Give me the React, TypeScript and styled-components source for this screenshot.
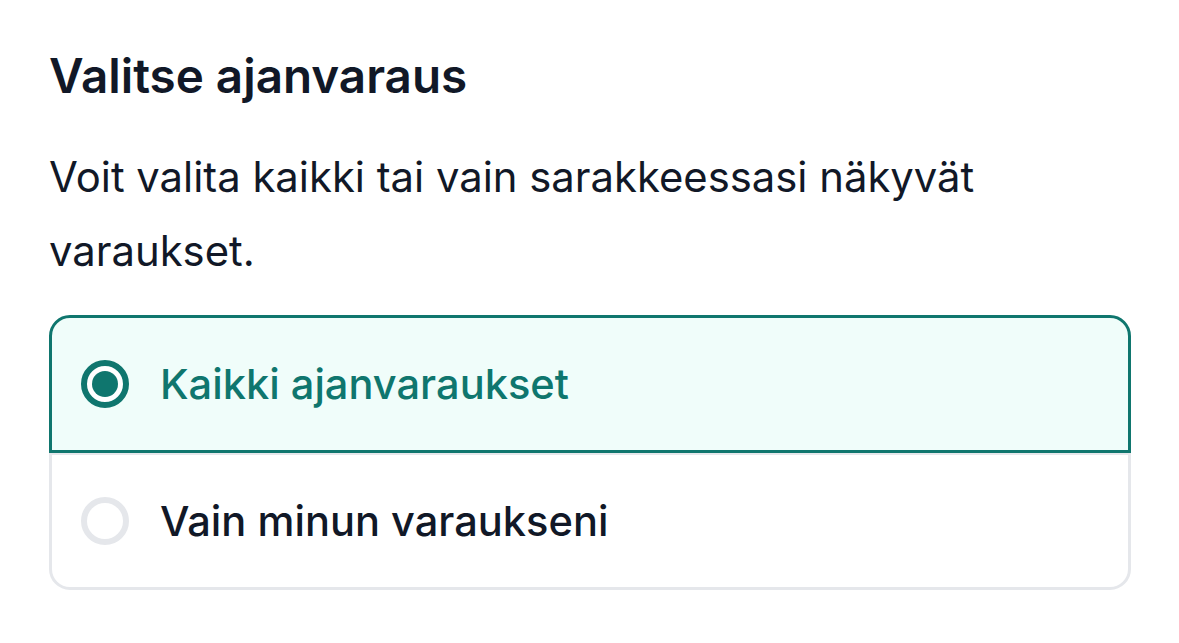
import React, {useState} from "react";
import styled, {createGlobalStyle} from "styled-components";

const GlobalStyle = createGlobalStyle`
  body {
    margin: 0;
    background: #ffffff;
    font-family: Inter, "Noto Sans", sans-serif;
    color: #111827;
  }
`;

const Page = styled.div`
  padding: 47px 48px 0 49px;
  width: 1082px;
`;

const Title = styled.h2`
  margin: 0;
  font-size: 47.6px;
  line-height: 58px;
  font-weight: 600;
  color: #111827;
`;

const Description = styled.p`
  margin: 36px 0 0 0;
  font-size: 41.8px;
  line-height: 73.5px;
  font-weight: 400;
  color: #111827;
`;

const Options = styled.div`
  margin-top: 27px;
  display: flex;
  flex-direction: column;
`;

const Option = styled.label<{ $checked: boolean; $first: boolean; $last: boolean }>`
  display: flex;
  align-items: center;
  gap: 31px;
  height: 138px;
  padding: 0 29px;
  box-sizing: border-box;
  cursor: pointer;
  background: ${p => (p.$checked ? "#f0fdfa" : "#ffffff")};
  border: 3px solid ${p => (p.$checked ? "#0f766e" : "#e5e7eb")};
  border-radius: ${p => (p.$first ? "21px 21px 0 0" : p.$last ? "0 0 21px 21px" : "0")};
  margin-top: ${p => (p.$first ? "0" : "-1px")};
  position: relative;
  z-index: ${p => (p.$checked ? 1 : 0)};
`;

const Radio = styled.span<{ $checked: boolean }>`
  width: 48px;
  height: 48px;
  border-radius: 50%;
  box-sizing: border-box;
  border: 6px solid ${p => (p.$checked ? "#0f766e" : "#e5e7eb")};
  background: #ffffff;
  display: flex;
  align-items: center;
  justify-content: center;
  flex-shrink: 0;

  &::after {
    content: "";
    width: 26px;
    height: 26px;
    border-radius: 50%;
    background: ${p => (p.$checked ? "#0f766e" : "transparent")};
  }
`;

const OptionLabel = styled.span<{ $checked: boolean }>`
  font-size: 41.6px;
  font-weight: 500;
  color: ${p => (p.$checked ? "#0f766e" : "#111827")};
`;

const choices = [
    {id: "all", label: "Kaikki ajanvaraukset"},
    {id: "mine", label: "Vain minun varaukseni"},
];

export default function App() {
    const [selected, setSelected] = useState("all");
    return (
        <>
            <GlobalStyle/>
            <Page>
                <Title>Valitse ajanvaraus</Title>
                <Description>Voit valita kaikki tai vain sarakkeessasi näkyvät varaukset.</Description>
                <Options>
                    {choices.map((c, i) => {
                        const checked = selected === c.id;
                        return (
                            <Option key={c.id} $checked={checked} $first={i === 0}
                                    $last={i === choices.length - 1} onClick={() => setSelected(c.id)}>
                                <Radio $checked={checked}/>
                                <OptionLabel $checked={checked}>{c.label}</OptionLabel>
                            </Option>
                        );
                    })}
                </Options>
            </Page>
        </>
    );
}
